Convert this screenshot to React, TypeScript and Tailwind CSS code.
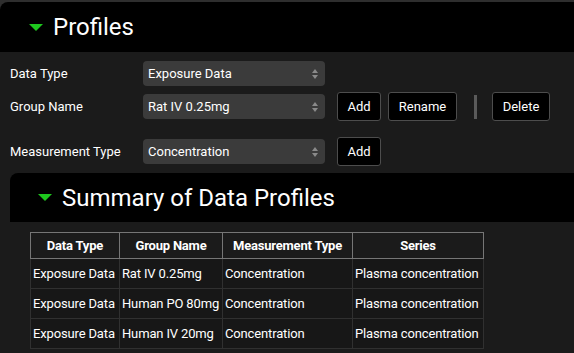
import { useState } from 'react';

interface RowI {
  dataType: string;
  groupName: string;
  measurement: string;
  series: string;
}

const rows: RowI[] = [
  { dataType: 'Exposure Data', groupName: 'Rat IV 0.25mg', measurement: 'Concentration', series: 'Plasma concentration' },
  { dataType: 'Exposure Data', groupName: 'Human PO 80mg', measurement: 'Concentration', series: 'Plasma concentration' },
  { dataType: 'Exposure Data', groupName: 'Human IV 20mg', measurement: 'Concentration', series: 'Plasma concentration' },
];

const Caret = () => (
  <svg width="14" height="7" viewBox="0 0 14 7" className="shrink-0">
    <polygon points="0,0 14,0 7,7" fill="#1ec81e" />
  </svg>
);

const Select = ({ value, options }: { value: string; options: string[] }) => {
  const [selected, setSelected] = useState(value);
  return (
    <div className="relative w-[182px] h-[25px]">
      <select
        value={selected}
        onChange={(e) => setSelected(e.target.value)}
        className="appearance-none w-full h-full bg-[#3b3b3b] rounded-[4px] pl-[5px] text-[13px] text-white outline-none"
      >
        {options.map((o) => (
          <option key={o}>{o}</option>
        ))}
      </select>
      <svg width="6" height="10" viewBox="0 0 6 10" className="absolute right-[7px] top-[8px] pointer-events-none">
        <polygon points="0,4 3,0 6,4" fill="#8a8a8a" />
        <polygon points="0,6 3,10 6,6" fill="#8a8a8a" />
      </svg>
    </div>
  );
};

const Button = ({ label, width }: { label: string; width: string }) => (
  <button className={`${width} h-[29px] bg-black border border-[#4d4d4d] rounded-[3px] text-[13px] text-white`}>
    {label}
  </button>
);

const App = () => {
  return (
    <div className="w-[574px] h-[353px] overflow-hidden bg-[#1b1b1b] font-['Roboto',sans-serif] text-white">
      <div className="bg-[#2e2e2e] pt-[2px]">
        <div className="h-[50px] bg-black rounded-tl-[8px] flex items-center pl-[29px] gap-[10px]">
          <Caret />
          <span className="text-[24px] leading-none">Profiles</span>
        </div>
      </div>

      <div className="bg-[#1b1b1b] pt-[9px] pl-[10px]">
        <div className="flex items-center h-[25px]">
          <span className="w-[133px] text-[13px]">Data Type</span>
          <Select value="Exposure Data" options={['Exposure Data']} />
        </div>
        <div className="flex items-center h-[29px] mt-[6px]">
          <span className="w-[133px] text-[13px]">Group Name</span>
          <Select value="Rat IV 0.25mg" options={['Rat IV 0.25mg', 'Human PO 80mg', 'Human IV 20mg']} />
          <div className="flex items-center gap-[7px] ml-[12px]">
            <Button label="Add" width="w-[44px]" />
            <Button label="Rename" width="w-[69px]" />
          </div>
          <div className="w-[3px] h-[24px] bg-[#5a5a5a] ml-[17px]" />
          <div className="ml-[15px]">
            <Button label="Delete" width="w-[58px]" />
          </div>
        </div>
        <div className="flex items-center h-[29px] mt-[16px]">
          <span className="w-[133px] text-[13px]">Measurement Type</span>
          <Select value="Concentration" options={['Concentration']} />
          <div className="ml-[12px]">
            <Button label="Add" width="w-[44px]" />
          </div>
        </div>

        <div className="mt-[7px]">
          <div className="h-[49px] bg-black rounded-tl-[8px] flex items-center pl-[28px] gap-[10px]">
            <Caret />
            <span className="text-[24px] leading-none">Summary of Data Profiles</span>
          </div>
          <div className="pt-[10px] pl-[20px]">
            <table className="table-fixed w-[453px] border-collapse text-[13px]">
              <colgroup>
                <col className="w-[89px]" />
                <col className="w-[103px]" />
                <col className="w-[130px]" />
                <col className="w-[131px]" />
              </colgroup>
              <thead>
                <tr className="h-[26px]">
                  <th className="border border-[#767676] font-bold tracking-[-0.2px]">Data Type</th>
                  <th className="border border-[#767676] font-bold tracking-[-0.2px]">Group Name</th>
                  <th className="border border-[#767676] font-bold tracking-[-0.2px]">Measurement Type</th>
                  <th className="border border-[#767676] font-bold tracking-[-0.2px]">Series</th>
                </tr>
              </thead>
              <tbody>
                {rows.map((r, i) => (
                  <tr key={i} className="h-[30px] bg-[#171717]">
                    <td className="border border-[#303030] px-[2px] whitespace-nowrap overflow-hidden tracking-[-0.15px]">{r.dataType}</td>
                    <td className="border border-[#303030] px-[2px] whitespace-nowrap overflow-hidden tracking-[-0.15px]">{r.groupName}</td>
                    <td className="border border-[#303030] px-[2px] whitespace-nowrap overflow-hidden tracking-[-0.15px]">{r.measurement}</td>
                    <td className="border border-[#303030] px-[2px] whitespace-nowrap overflow-hidden tracking-[-0.15px]">{r.series}</td>
                  </tr>
                ))}
              </tbody>
            </table>
          </div>
        </div>
      </div>
    </div>
  );
};

export default App;
